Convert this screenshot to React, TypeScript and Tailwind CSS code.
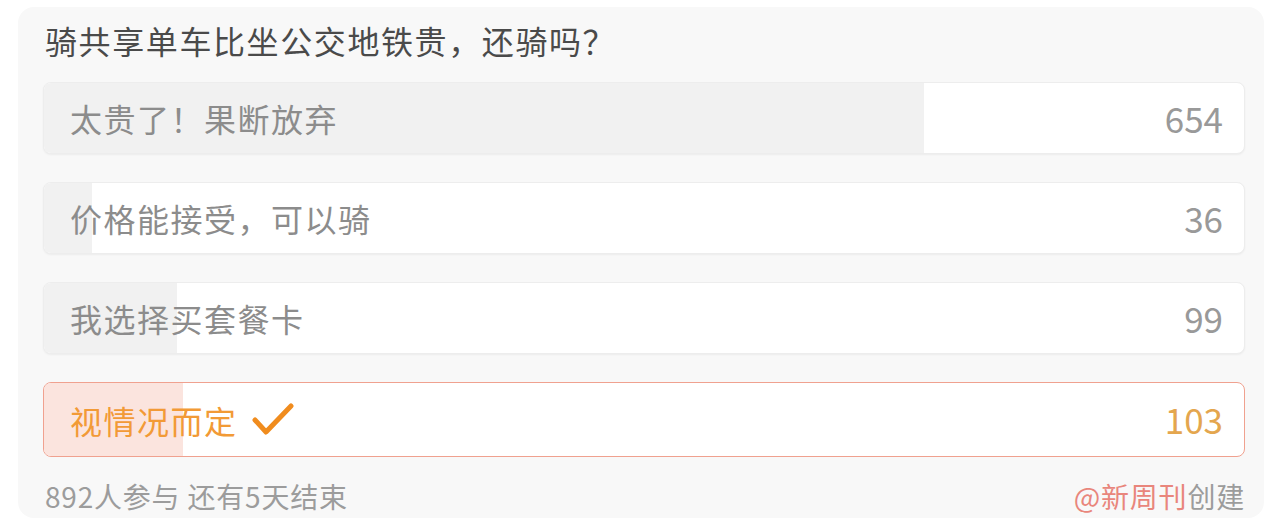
const options = [
  { label: '太贵了！果断放弃', count: 654 },
  { label: '价格能接受，可以骑', count: 36 },
  { label: '我选择买套餐卡', count: 99 },
  { label: '视情况而定', count: 103, picked: true },
];

const total = 892;

function CheckMark() {
  return (
    <svg width="42" height="34" viewBox="0 0 42 34" className="ml-[14px]">
      <polyline points="3,17 14,29 39,3" fill="none" stroke="#f08c1e" strokeWidth="5" strokeLinecap="round" strokeLinejoin="round" />
    </svg>
  );
}

function OptionRow({ label, count, picked }: { label: string; count: number; picked?: boolean }) {
  const pct = (count / total) * 100;
  return (
    <div
      className={
        picked
          ? 'relative h-[75px] rounded-lg border-[1.5px] border-[#f0a18f] bg-white overflow-hidden'
          : 'relative h-[72px] rounded-lg border border-[#ededed] bg-white overflow-hidden shadow-[0_1px_2px_rgba(0,0,0,0.05)]'
      }
    >
      <div
        className={picked ? 'absolute inset-y-0 left-0 bg-[#fbe4de]' : 'absolute inset-y-0 left-0 bg-[#f1f1f1]'}
        style={{ width: pct + '%' }}
      />
      <div className="relative flex h-full items-center justify-between pl-[26px] pr-[21px]">
        <div className={picked ? 'flex items-center text-[32px] tracking-[1.5px] text-[#f29a36]' : 'text-[32px] tracking-[1.5px] text-[#8c8c8c]'}>
          <span>{label}</span>
          {picked && <CheckMark />}
        </div>
        <span className={picked ? 'text-[35px] text-[#e4a64e]' : 'text-[35px] text-[#999]'}>{count}</span>
      </div>
    </div>
  );
}

export default function App() {
  return (
    <div className="w-[1269px] h-[526px] bg-white pt-[7px] pl-[18px] font-['Noto_Sans_CJK_SC','Noto_Sans',sans-serif]">
      <div className="w-[1246px] h-[511px] rounded-2xl bg-[#f8f8f8] pl-[25px] pr-[19px] pt-[12px]">
        <div className="text-[32px] leading-[42px] tracking-[1.6px] text-[#4a4a4a] pl-[2px]">骑共享单车比坐公交地铁贵，还骑吗？</div>
        <div className="mt-[21px] flex flex-col gap-[28px]">
          {options.map((o) => (
            <OptionRow key={o.label} {...o} />
          ))}
        </div>
        <div className="mt-[21px] flex items-center justify-between text-[28px] leading-[36px] tracking-[0.8px]">
          <span className="text-[#9c9c9c] pl-[2px]">892人参与 还有5天结束</span>
          <span>
            <span className="text-[#e9867c]">@新周刊</span>
            <span className="text-[#9c9c9c]">创建</span>
          </span>
        </div>
      </div>
    </div>
  );
}
